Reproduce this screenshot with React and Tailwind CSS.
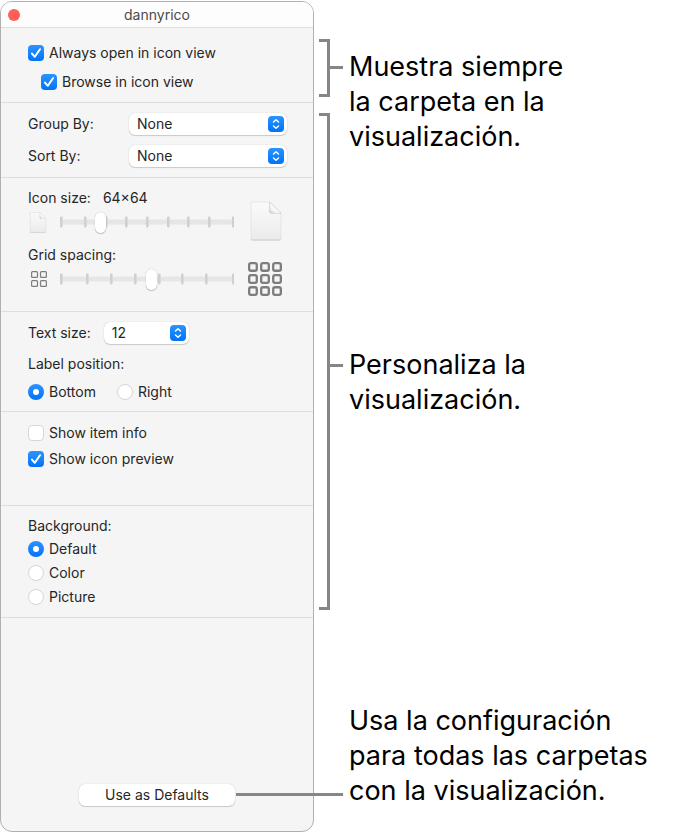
import React, { useState } from 'react';

const ICON_TICKS = [1, 25, 46, 66, 87, 108, 128, 149, 173];
const GRID_TICKS = [1, 27, 51, 75, 99, 122, 146, 173];

const BACKGROUNDS = ['Default', 'Color', 'Picture'];

function Checkbox({ label, checked, onChange }) {
  return (
    <label className="flex items-center gap-[5px] h-5">
      <span className="grid shrink-0">
        <input
          type="checkbox"
          checked={checked}
          onChange={(e) => onChange(e.target.checked)}
          className="peer col-start-1 row-start-1 appearance-none w-4 h-4 rounded-[4px] bg-white border border-[#d6d6d6] checked:border-0 checked:bg-linear-to-b checked:from-[#2b93ff] checked:to-[#0073f8]"
        />
        <svg viewBox="0 0 16 16" className="col-start-1 row-start-1 w-4 h-4 pointer-events-none invisible peer-checked:visible" fill="none" stroke="white" strokeWidth="2" strokeLinecap="round" strokeLinejoin="round">
          <path d="M4 8.6 6.8 11.8 12 4.2" />
        </svg>
      </span>
      {label}
    </label>
  );
}

function Radio({ name, label, checked, onChange }) {
  return (
    <label className="flex items-center gap-[5px] h-5">
      <span className="grid shrink-0">
        <input
          type="radio"
          name={name}
          checked={checked}
          onChange={onChange}
          className="peer col-start-1 row-start-1 appearance-none w-4 h-4 rounded-full bg-white border border-[#d6d6d6] checked:border-0 checked:bg-linear-to-b checked:from-[#2b93ff] checked:to-[#0073f8]"
        />
        <span className="col-start-1 row-start-1 place-self-center w-[6px] h-[6px] rounded-full bg-white pointer-events-none invisible peer-checked:visible" />
      </span>
      {label}
    </label>
  );
}

function Select({ id, options, className }) {
  return (
    <span className={`grid ${className}`}>
      <select id={id} className="col-start-1 row-start-1 appearance-none w-full h-[22px] pl-2 rounded-[6px] bg-white shadow-[0_0_1px_rgba(0,0,0,0.25),0_1px_1px_rgba(0,0,0,0.16)]">
        {options.map((o) => <option key={o}>{o}</option>)}
      </select>
      <svg viewBox="0 0 16 16" className="col-start-1 row-start-1 place-self-center justify-self-end mr-[3px] w-4 h-4 pointer-events-none" fill="none">
        <defs>
          <linearGradient id={`${id}-fill`} x1="0" y1="0" x2="0" y2="1">
            <stop offset="0" stopColor="#2b93ff" />
            <stop offset="1" stopColor="#0073f8" />
          </linearGradient>
        </defs>
        <rect width="16" height="16" rx="4" fill={`url(#${id}-fill)`} />
        <path d="M5.5 6 8 3.8 10.5 6M5.5 10 8 12.2 10.5 10" stroke="white" strokeWidth="1.5" strokeLinecap="round" strokeLinejoin="round" />
      </svg>
    </span>
  );
}

function Slider({ id, ticks, ...props }) {
  return (
    <span className="grid w-[174px]">
      <svg viewBox="0 0 174 22" className="col-start-1 row-start-1 w-full h-[22px]">
        <rect x="0" y="8.5" width="174" height="5" fill="#e6e6e6" />
        {ticks.map((x) => <rect key={x} x={x - 1} y="5.5" width="2.6" height="11" rx="1" fill="#d0d0d0" />)}
      </svg>
      <input
        id={id}
        type="range"
        className="col-start-1 row-start-1 appearance-none w-full h-[22px] bg-transparent [&::-webkit-slider-thumb]:appearance-none [&::-webkit-slider-thumb]:w-[11px] [&::-webkit-slider-thumb]:h-[21px] [&::-webkit-slider-thumb]:rounded-full [&::-webkit-slider-thumb]:bg-white [&::-webkit-slider-thumb]:shadow-[0_0_1px_rgba(0,0,0,0.3),0_1px_1px_rgba(0,0,0,0.2)]"
        {...props}
      />
    </span>
  );
}

function DocIcon({ id, className }) {
  return (
    <svg viewBox="0 0 32 40" className={className}>
      <defs>
        <linearGradient id={`${id}-page`} x1="0" y1="0" x2="0" y2="1">
          <stop offset="0" stopColor="#fafafa" />
          <stop offset="1" stopColor="#ebebeb" />
        </linearGradient>
        <linearGradient id={`${id}-fold`} x1="0" y1="1" x2="1" y2="0">
          <stop offset="0" stopColor="#c4c4c4" />
          <stop offset="0.3" stopColor="#f4f4f4" />
          <stop offset="0.5" stopColor="#ffffff" />
        </linearGradient>
      </defs>
      <path d="M1 2.6Q1 1.6 2 1.6H20L31 12.6V38Q31 39.4 30 39.4H2Q1 39.4 1 38.4Z" fill="#c4c4c4" />
      <path d="M1 2Q1 1 2 1H20L31 12V37.4Q31 38.4 30 38.4H2Q1 38.4 1 37.4Z" fill={`url(#${id}-page)`} stroke="#dcdcdc" strokeWidth="0.6" />
      <path d="M19.5 1 31 12.3H21.5Q19.5 12.3 19.5 10.3Z" fill={`url(#${id}-fold)`} stroke="#c4c4c4" strokeWidth="0.6" />
    </svg>
  );
}

function GridIcon({ count, cell, pitch, stroke, className }) {
  const size = pitch * (count - 1) + cell + stroke;
  const cells = [];
  for (let r = 0; r < count; r++) {
    for (let c = 0; c < count; c++) cells.push([c, r]);
  }
  return (
    <svg viewBox={`0 0 ${size} ${size}`} className={className} fill="none" stroke="#7d7d7d" strokeWidth={stroke}>
      {cells.map(([c, r]) => (
        <rect key={`${c}-${r}`} x={c * pitch + stroke / 2} y={r * pitch + stroke / 2} width={cell} height={cell} rx={stroke * 0.8} />
      ))}
    </svg>
  );
}

function Bracket({ className }) {
  return <div className={`w-[11px] border-[3px] border-l-0 border-[#868686] ${className}`} />;
}

export default function App() {
  const [alwaysOpen, setAlwaysOpen] = useState(true);
  const [browse, setBrowse] = useState(true);
  const [itemInfo, setItemInfo] = useState(false);
  const [preview, setPreview] = useState(true);
  const [iconSize, setIconSize] = useState(64);
  const [spacing, setSpacing] = useState(53);
  const [position, setPosition] = useState('Bottom');
  const [background, setBackground] = useState('Default');

  return (
    <main className="flex pt-px bg-white font-['Inter',sans-serif]">
      <section className="w-[314px] shrink-0 rounded-[12px] border border-[#b0b0b0] bg-[#f5f5f5] text-sm leading-5 text-[#262626] overflow-hidden">
        <header className="grid grid-cols-[1fr_auto_1fr] items-center h-[25px] px-[7px] bg-[#fdfdfd]">
          <button aria-label="Close" className="w-3 h-3 rounded-full bg-[#ff5f57]" />
          <h1 className="text-[#4a4a4a]">dannyrico</h1>
        </header>

        <div className="border-t border-[#dedede] flex flex-col gap-[9px] pt-[15px] pb-[10px] pl-[27px] pr-[26px]">
          <Checkbox label="Always open in icon view" checked={alwaysOpen} onChange={setAlwaysOpen} />
          <div className="pl-[13px]">
            <Checkbox label="Browse in icon view" checked={browse} onChange={setBrowse} />
          </div>
        </div>

        <div className="border-t border-[#dedede] grid grid-cols-[101px_1fr] items-center gap-y-[10px] pt-[10px] pb-[10px] pl-[27px] pr-[26px]">
          <label htmlFor="group-by">Group By:</label>
          <Select id="group-by" options={['None', 'Name', 'Kind', 'Size']} className="w-[158px]" />
          <label htmlFor="sort-by">Sort By:</label>
          <Select id="sort-by" options={['None', 'Name', 'Kind', 'Size']} className="w-[158px]" />
        </div>

        <div className="border-t border-[#dedede] flex flex-col gap-1 pt-[10px] pb-[15px] pl-[27px] pr-[26px]">
          <div className="flex items-end justify-between">
            <div className="flex flex-col gap-[3px] pb-2">
              <div className="flex gap-3">
                <label htmlFor="icon-size">Icon size:</label>
                <output htmlFor="icon-size">{iconSize}×{iconSize}</output>
              </div>
              <div className="flex items-center">
                <DocIcon id="doc-small" className="w-[20px] h-[21px] mr-3" />
                <Slider id="icon-size" ticks={ICON_TICKS} min={16} max={240} value={iconSize} onChange={(e) => setIconSize(Number(e.target.value))} />
              </div>
            </div>
            <DocIcon id="doc-large" className="w-8 h-10 mr-[5px]" />
          </div>
          <div className="flex items-end justify-between">
            <div className="flex flex-col gap-[3px] pb-[6px]">
              <label htmlFor="grid-spacing">Grid spacing:</label>
              <div className="flex items-center">
                <GridIcon count={2} cell={5.8} pitch={8.8} stroke={1.2} className="w-4 h-4 ml-[3px] mr-[13px]" />
                <Slider id="grid-spacing" ticks={GRID_TICKS} min={0} max={100} value={spacing} onChange={(e) => setSpacing(Number(e.target.value))} />
              </div>
            </div>
            <GridIcon count={3} cell={7.6} pitch={12} stroke={2.3} className="w-[34px] h-[34px] mr-[5px]" />
          </div>
        </div>

        <div className="border-t border-[#dedede] pt-[10px] pb-[9px] pl-[27px] pr-[26px]">
          <div className="flex items-center gap-[13px]">
            <label htmlFor="text-size">Text size:</label>
            <Select id="text-size" options={['12', '10', '11', '13', '14', '15', '16']} className="w-[85px]" />
          </div>
          <fieldset>
            <legend className="pt-[10px] pb-2">Label position:</legend>
            <div className="flex gap-[21px]">
              {['Bottom', 'Right'].map((p) => (
                <Radio key={p} name="position" label={p} checked={position === p} onChange={() => setPosition(p)} />
              ))}
            </div>
          </fieldset>
        </div>

        <div className="border-t border-[#dedede] flex flex-col gap-[6px] pt-[11px] pb-[36px] pl-[27px] pr-[26px]">
          <Checkbox label="Show item info" checked={itemInfo} onChange={setItemInfo} />
          <Checkbox label="Show icon preview" checked={preview} onChange={setPreview} />
        </div>

        <div className="border-t border-[#dedede] pt-[10px] pb-[10px] pl-[27px] pr-[26px]">
          <fieldset>
            <legend className="pb-[3px]">Background:</legend>
            <div className="flex flex-col gap-1">
              {BACKGROUNDS.map((b) => (
                <Radio key={b} name="background" label={b} checked={background === b} onChange={() => setBackground(b)} />
              ))}
            </div>
          </fieldset>
        </div>

        <footer className="border-t border-[#dedede] flex justify-center pt-[166px] pb-[25px]">
          <button className="w-[156px] h-[22px] rounded-[6px] bg-white shadow-[0_0_1px_rgba(0,0,0,0.25),0_1px_1px_rgba(0,0,0,0.16)]">Use as Defaults</button>
        </footer>
      </section>

      <div className="flex flex-col gap-4 shrink-0 pl-[5px] pt-[38px] pb-[222px]">
        <Bracket className="h-[58px]" />
        <Bracket className="flex-1" />
      </div>

      <div className="flex-1 flex flex-col text-[27px] leading-[35px] text-black pt-[48px]">
        <div className="flex items-start gap-[6px]">
          <span className="w-[13px] h-[3px] mt-[17px] shrink-0 bg-[#868686]" />
          <p>Muestra siempre<br />la carpeta en la<br />visualización.</p>
        </div>
        <div className="flex items-start gap-[6px] mt-[193px]">
          <span className="w-[13px] h-[3px] mt-[17px] shrink-0 bg-[#868686]" />
          <p>Personaliza la<br />visualización.</p>
        </div>
        <div className="relative pl-[19px] mt-[286px]">
          <span className="absolute bottom-3 -left-[94px] w-[107px] h-[3px] bg-[#868686]" />
          <p>Usa la configuración<br />para todas las carpetas<br />con la visualización.</p>
        </div>
      </div>
    </main>
  );
}
